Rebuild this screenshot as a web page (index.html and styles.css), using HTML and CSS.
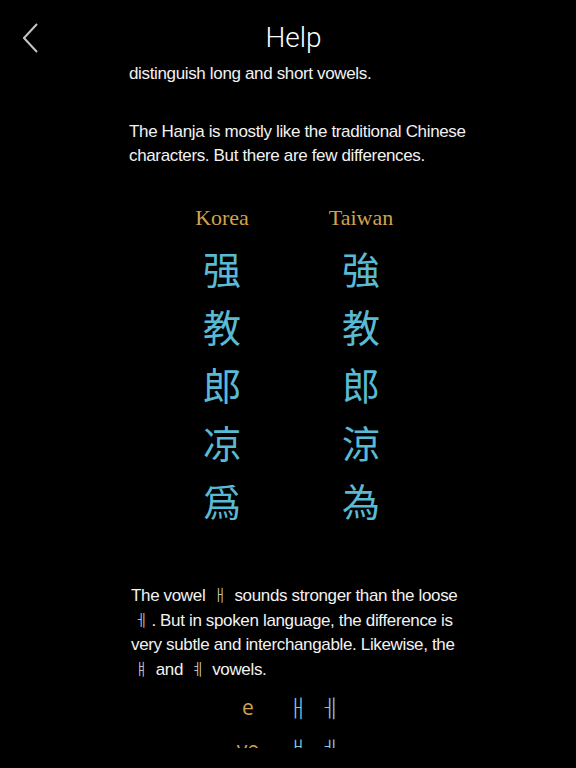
FILE: index.html
```html
<!DOCTYPE html>
<html lang="en">
<head>
<meta charset="utf-8">
<title>Help</title>
<link rel="stylesheet" href="styles.css">
</head>
<body>
<div class="app">
  <header class="topbar">
    <button class="back" aria-label="Back">
      <svg width="16" height="30" viewBox="0 0 16 30"><polyline points="14,1 1,15 14,29" fill="none" stroke="#c4c4c4" stroke-width="2"/></svg>
    </button>
    <h1 class="title">Help</h1>
    <div class="spacer"></div>
  </header>
  <main class="scroll">
    <p class="text first">distinguish long and short vowels.</p>
    <p class="text">The Hanja is mostly like the traditional Chinese characters. But there are few differences.</p>
    <div class="compare">
      <div class="col korea">
        <div class="label">Korea</div>
        <div class="han">强</div>
        <div class="han">教</div>
        <div class="han">郎</div>
        <div class="han">凉</div>
        <div class="han">爲</div>
      </div>
      <div class="col taiwan">
        <div class="label">Taiwan</div>
        <div class="han">強</div>
        <div class="han">教</div>
        <div class="han">郎</div>
        <div class="han">涼</div>
        <div class="han">為</div>
      </div>
    </div>
    <p class="text vowels">The vowel <span class="jamo">ㅐ</span> sounds stronger than the loose <span class="jamo">ㅔ</span>. But in spoken language, the difference is very subtle and interchangable. Likewise, the <span class="jamo">ㅒ</span> and <span class="jamo">ㅖ</span> vowels.</p>
    <div class="pairs">
      <div class="pair"><span class="roman">e</span><span class="vj first-j">ㅐ</span><span class="vj">ㅔ</span></div>
      <div class="pair"><span class="roman">ye</span><span class="vj first-j">ㅒ</span><span class="vj">ㅖ</span></div>
    </div>
  </main>
</div>
</body>
</html>
```
FILE: styles.css
```css
html, body {
  margin: 0;
  padding: 0;
  background: #000;
}
.app {
  width: 576px;
  height: 768px;
  overflow: hidden;
  background: #000;
  color: #fff;
  font-family: "Liberation Sans", "Noto Sans CJK KR", sans-serif;
}
.topbar {
  height: 62px;
  display: grid;
  grid-template-columns: 1fr auto 1fr;
  align-items: start;
}
.back {
  justify-self: start;
  margin: 23px 0 0 23px;
  padding: 0;
  border: 0;
  background: none;
  line-height: 0;
}
.title {
  margin: 21px 0 0 11px;
  font-family: Roboto, "Liberation Sans", sans-serif;
  font-weight: 300;
  font-size: 28px;
  line-height: 34px;
  color: #fff;
}
.scroll {
  height: 686px;
  overflow: hidden;
}
.text {
  margin: 34px 0 0 129px;
  width: 345px;
  font-size: 17px;
  line-height: 24px;
  letter-spacing: -0.35px;
  color: #f2f2f2;
}
.text.first {
  margin-top: 0;
}
.compare {
  display: flex;
  column-gap: 19px;
  margin: 36px 0 0 162px;
}
.col {
  width: 120px;
  display: flex;
  flex-direction: column;
  align-items: center;
}
.label {
  font-family: "Liberation Serif", serif;
  font-size: 22px;
  line-height: 28px;
  color: #d1a34d;
  margin-bottom: 7px;
}
.han {
  font-size: 38px;
  line-height: 58px;
  color: #5ab9d3;
}
.korea .han {
  font-family: "Noto Sans CJK KR", sans-serif;
}
.taiwan .han {
  font-family: "Noto Sans CJK TC", sans-serif;
}
.text.vowels {
  margin: 55px 0 0 131px;
  line-height: 24.7px;
}
.jamo {
  font-family: "Noto Sans CJK KR", sans-serif;
  font-weight: 300;
  font-size: 16px;
  line-height: 1;
  color: #dcdcdc;
  margin: 0 3px;
}
.pairs {
  margin: 3px 0 0 228px;
}
.pair {
  display: flex;
  height: 42px;
  align-items: center;
}
.roman {
  width: 40px;
  text-align: center;
  font-family: "Open Sans", sans-serif;
  font-size: 21px;
  line-height: 28px;
  color: #d1a34d;
}
.vj {
  width: 30px;
  text-align: center;
  font-family: "Noto Sans CJK KR", sans-serif;
  font-weight: 300;
  font-size: 24px;
  line-height: 28px;
  color: #86cbe0;
  margin-left: 2px;
}
.vj.first-j {
  margin-left: 15px;
}
```
